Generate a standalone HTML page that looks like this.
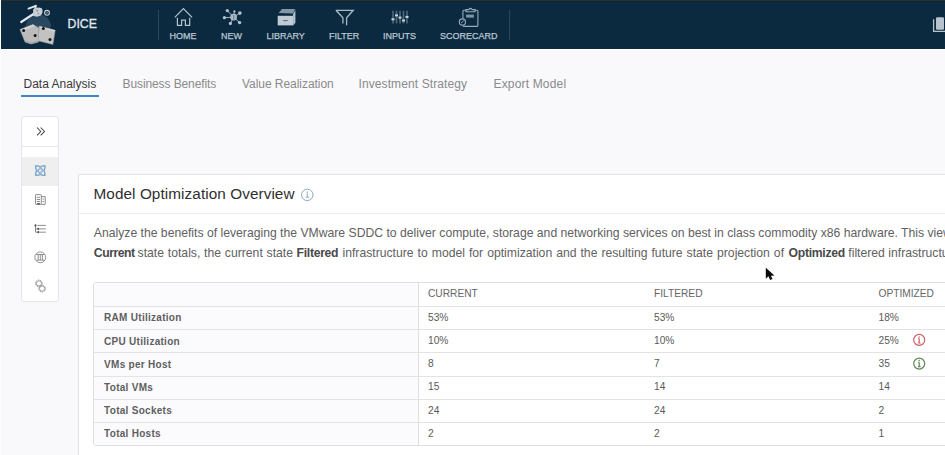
<!DOCTYPE html>
<html><head><meta charset="utf-8">
<style>
*{box-sizing:border-box;margin:0;padding:0}
html,body{width:945px;height:455px;overflow:hidden;background:#f9f9fc;font-family:"Liberation Sans",sans-serif;position:relative}
.a{position:absolute;white-space:nowrap;line-height:1}
#hdr{position:absolute;left:0;top:0;width:945px;height:49px;background:#0b2a40}
#hdr .topline{position:absolute;left:0;top:0;width:945px;height:1px;background:#283037}
#hdr .topline2{position:absolute;left:0;top:1px;width:945px;height:1px;background:#13252f}
#hdr .leftline{position:absolute;left:0;top:0;width:1px;height:49px;background:#f4f5f6}
.sep{position:absolute;top:10px;width:1px;height:30px;background:#2b475c}
.nl{position:absolute;top:31.7px;font-size:9px;line-height:1;color:#bac7d2;-webkit-text-stroke:0.25px #bac7d2;white-space:nowrap}
.tab{position:absolute;top:77.8px;font-size:12px;line-height:1;color:#8a8a8a;white-space:nowrap}
#side{position:absolute;left:20.5px;top:116px;width:38px;height:186px;background:#fff;border:1px solid #e6e6e6;border-radius:3px}
#card{position:absolute;left:78px;top:174px;width:900px;height:300px;background:#fff;border:1px solid #e2e2e4;border-radius:2px}
.desc{position:absolute;left:93.8px;top:222.7px;font-size:12.2px;line-height:20px;color:#616161;white-space:nowrap}
.desc b{color:#4a4a4a}
#tbl{position:absolute;left:93px;top:282px;width:900px;height:163.5px;background:#fff;border:1px solid #dedede;border-radius:3px;overflow:hidden}
.row{position:absolute;left:0;width:900px;height:1px;background:#e3e3e3}
.th{position:absolute;margin-top:1px;font-size:10.2px;line-height:1;color:#666;white-space:nowrap}
.lab{position:absolute;left:104.1px;margin-top:1.4px;font-size:10px;letter-spacing:0.28px;font-weight:bold;line-height:1;color:#5f5f5f;white-space:nowrap}
.val{position:absolute;margin-top:0.8px;font-size:10.2px;line-height:1;color:#5a5a5a;white-space:nowrap}
</style></head><body>
<div id="hdr">
  <div class="topline"></div><div class="topline2"></div><div class="leftline"></div>
  <!-- logo -->
  <svg style="position:absolute;left:0;top:0" width="60" height="49" viewBox="0 0 60 49">
    <path d="M25 28 Q27 16 38 14.5 Q49 14.5 51 25 L50 30 L25 30 Z" fill="#29475e"/>
    <g stroke="#e2e7ec" stroke-linecap="round" fill="none">
      <path d="M21.2 22 L33.5 14" stroke-width="2.2"/>
      <path d="M28.5 8.6 L35.8 5.8" stroke-width="1.9"/>
      <path d="M35.6 6 L34.6 15" stroke-width="1.9"/>
    </g>
    <path d="M33.2 9.2 Q37.5 6.5 41.8 8.3 Q43.8 12 40.8 15.6 Q36.5 17.8 33 15.6 Z" fill="#c6cdd3"/>
    <circle cx="37.2" cy="10.6" r="0.9" fill="#7a8793"/><circle cx="38.3" cy="13.6" r="0.8" fill="#8a96a0"/>
    <circle cx="47" cy="12.8" r="2.4" fill="none" stroke="#c9d0d6" stroke-width="1.1"/>
    <path d="M46.2 12 Q47.5 11.5 47.6 13 Q47 14 46 13.6" fill="none" stroke="#aab3bb" stroke-width="0.6"/>
    <path d="M20 29.5 L33 24.5 L39 28 L38.5 42 L31 44 L25 42 Z" fill="#bcbcbc" stroke="#9fa3a7" stroke-width="0.5"/>
    <path d="M20.3 29.6 L33 24.6 L35 26 L22 31 Z" fill="#d4d4d4"/>
    <path d="M39.4 26.2 L55.2 30.2 L52.9 44.4 L38.1 40.7 Z" fill="#c2c2c2" stroke="#a2a6aa" stroke-width="0.5"/>
    <path d="M39.4 26.3 L55.1 30.3 L54.9 31.6 L39.3 27.6 Z" fill="#d8d8d8"/>
    <path d="M25 42 L31 44 L38.5 42 L38.3 40.5 L31 42.6 L25.5 40.8 Z" fill="#a5a5a5"/>
    <circle cx="23.6" cy="30.4" r="1.5" fill="#151515"/>
    <circle cx="35.1" cy="35.5" r="1.5" fill="#151515"/>
    <circle cx="43.4" cy="28.6" r="1.5" fill="#151515"/>
    <circle cx="50" cy="39.4" r="1.5" fill="#151515"/>
  </svg>
  <div class="a" style="left:67.5px;top:18.4px;font-size:12.3px;color:#e2e8ee;-webkit-text-stroke:0.3px #e2e8ee">DICE</div>
  <div class="sep" style="left:158px"></div>
  <div class="sep" style="left:509px"></div>
  <!-- home -->
  <svg style="position:absolute;left:0;top:0" width="520" height="49" viewBox="0 0 520 49">
    <g fill="none" stroke="#b4c3cf" stroke-width="1.2">
      <path d="M174.8 17.4 L183.4 8.6 L192.1 17.4"/>
      <path d="M177.4 17.8 V25.3 H181.6 V20.2 H185.4 V25.3 H189.7 V17.8"/>
    </g>
    <g stroke="#b4c3cf" stroke-width="0.9">
      <line x1="233.6" y1="17.15" x2="227.3" y2="10.6"/><line x1="233.6" y1="17.15" x2="234.4" y2="11.4"/>
      <line x1="233.6" y1="17.15" x2="239.9" y2="13.1"/><line x1="233.6" y1="17.15" x2="224.4" y2="17.7"/>
      <line x1="233.6" y1="17.15" x2="230.4" y2="23.4"/><line x1="233.6" y1="17.15" x2="239.6" y2="22.6"/>
    </g>
    <g fill="#b4c3cf">
      <circle cx="227.3" cy="10.6" r="1.6"/><circle cx="234.4" cy="11.4" r="1.1"/><circle cx="239.9" cy="13.1" r="1.8"/>
      <circle cx="224.4" cy="17.7" r="1.6"/><circle cx="230.4" cy="23.4" r="1.6"/><circle cx="239.6" cy="22.6" r="1.7"/>
      <circle cx="233.6" cy="17.15" r="3.3"/>
    </g>
    <path d="M233.8 15 V19.5" stroke="#4d6477" stroke-width="0.9"/>
    <circle cx="233.6" cy="17.15" r="2.2" fill="none" stroke="#8a9daf" stroke-width="0.5"/>
    <!-- library -->
    <path d="M278.6 13 L282 9.1 L295.1 9.1 L293 13.5 Z" fill="#8397a8"/>
    <path d="M293.1 14 L295.4 10 L295.4 22.8 L293.1 25.4 Z" fill="#b5c3cf"/>
    <rect x="277.7" y="15.8" width="15.4" height="9.6" fill="#bfcbd5"/>
    <rect x="283.2" y="20.1" width="4.5" height="1" fill="#52687a"/>
    <!-- filter -->
    <path d="M335.9 10.3 H353.2 L346.6 17.7 V25.2 M342.9 23.6 V17.7 L335.9 10.3" fill="none" stroke="#a8bac8" stroke-width="1.3"/>
    <!-- inputs -->
    <g stroke="#4c667a" stroke-width="1.7">
      <line x1="393" y1="10.8" x2="393" y2="23.4"/><line x1="396.5" y1="10.8" x2="396.5" y2="23.4"/><line x1="400" y1="10.8" x2="400" y2="23.4"/>
      <line x1="403.5" y1="10.8" x2="403.5" y2="23.4"/><line x1="407" y1="10.8" x2="407" y2="23.4"/>
    </g>
    <g fill="#c9d4dd">
      <rect x="391.5" y="18.3" width="3" height="2"/><rect x="395" y="14.4" width="3" height="2"/><rect x="398.5" y="16.6" width="3" height="2"/>
      <rect x="402" y="19.5" width="3" height="2"/><rect x="405.5" y="15.9" width="3" height="2"/>
    </g>
    <!-- scorecard -->
    <g fill="none" stroke="#98acbc" stroke-width="1.1">
      <path d="M466 10.2 H463.8 Q462.9 10.2 462.9 11.2 V18.5 M462.9 25.5 Q462.9 26.4 463.8 26.4 H477 Q477.9 26.4 477.9 25.5 V11.2 Q477.9 10.2 477 10.2 H475"/>
      <path d="M466 11.7 V9.6 H468.8 Q470.4 7.2 472 9.6 H475 V11.7 Z"/>
    </g>
    <rect x="466.1" y="14.6" width="7.8" height="3" fill="#7e95a7"/>
    <circle cx="462.4" cy="22" r="3.1" fill="none" stroke="#98acbc" stroke-width="1.1"/>
    <path d="M461 23 L463.8 20.6" stroke="#98acbc" stroke-width="0.9"/>
  </svg>
  <div class="nl" style="left:169.5px">HOME</div>
  <div class="nl" style="left:221px">NEW</div>
  <div class="nl" style="left:266.5px">LIBRARY</div>
  <div class="nl" style="left:329px">FILTER</div>
  <div class="nl" style="left:383px">INPUTS</div>
  <div class="nl" style="left:440px">SCORECARD</div>
  <!-- right icon -->
  <svg style="position:absolute;left:925px;top:10px" width="20" height="30" viewBox="925 10 20 30">
    <path d="M933.6 19.3 V31.4 H945" fill="none" stroke="#b7c4cf" stroke-width="1.3"/>
    <rect x="936" y="17.2" width="8" height="12.5" rx="1.2" fill="#b9c3cd"/>
  </svg>
</div>
<div style="position:absolute;left:0;top:49px;width:945px;height:1px;background:#fff"></div>
<div style="position:absolute;left:0;top:0;width:1px;height:455px;background:#fdfdfe"></div>

<!-- tabs -->
<div class="tab" style="left:23.5px;color:#3a3a3a">Data Analysis</div>
<div style="position:absolute;left:21px;top:95px;width:78px;height:2px;background:#3b88bf"></div>
<div class="tab" style="left:122.5px;letter-spacing:-0.1px">Business Benefits</div>
<div class="tab" style="left:242px;letter-spacing:-0.05px">Value Realization</div>
<div class="tab" style="left:358.5px;letter-spacing:0.1px">Investment Strategy</div>
<div class="tab" style="left:493.5px;letter-spacing:0.17px">Export Model</div>

<!-- side -->
<div id="side">
  <div style="position:absolute;left:0;top:29px;width:36px;height:1px;background:#e6e6e6"></div>
  <div style="position:absolute;left:0;top:40px;width:36px;height:29px;background:#efefef"></div>
</div>
<svg style="position:absolute;left:0;top:100px" width="70" height="210" viewBox="0 100 70 210">
  <path d="M37 127.5 L40.7 131.5 L37 135.4 M40.7 127.5 L44.5 131.5 L40.7 135.4" fill="none" stroke="#474747" stroke-width="1.05"/>
  <!-- active -->
  <g fill="none" stroke="#6a9dc6" stroke-width="0.8">
    <path d="M35.3 165.5 Q40.3 167.2 45.3 165.5 Q43.6 170.6 45.3 175.7 Q40.3 174 35.3 175.7 Q37 170.6 35.3 165.5 Z"/>
    <ellipse cx="40.3" cy="170.6" rx="6" ry="2.5" transform="rotate(45 40.3 170.6)"/>
    <ellipse cx="40.3" cy="170.6" rx="6" ry="2.5" transform="rotate(-45 40.3 170.6)"/>
    <ellipse cx="40.3" cy="170.6" rx="2.4" ry="1.4" transform="rotate(-45 40.3 170.6)"/>
  </g>
  <!-- building -->
  <g fill="none" stroke="#808080" stroke-width="0.9">
    <rect x="35.5" y="194.6" width="5.8" height="9.8" rx="0.6"/>
    <path d="M41.3 196.6 H45.2 V204.4 H41.3"/>
    <path d="M36.8 197.3 H40 M36.8 199.5 H40 M36.8 201.5 H40 M42.5 199 H44 M42.5 201.5 H44"/>
  </g>
  <rect x="37" y="203" width="3" height="1.6" fill="#666"/>
  <!-- tree list -->
  <g fill="none" stroke="#808080" stroke-width="0.9">
    <path d="M35.5 225.4 V232.2 H38.4 M35.5 228.9 H38.4"/>
    <path d="M37.5 225.4 H45.8 M40 228.9 H45.8 M40 232.2 H45.8"/>
  </g>
  <g fill="#555"><circle cx="35.5" cy="225.4" r="1.1"/><circle cx="38.4" cy="228.9" r="1.1"/><circle cx="38.4" cy="232.2" r="1.1"/></g>
  <!-- globe -->
  <g fill="none" stroke="#858585" stroke-width="0.9">
    <circle cx="40.3" cy="257.3" r="5.4"/>
    <path d="M36.2 254.5 H44.4 M36.2 260.1 H44.4 M38.2 254.5 V260.1 M40.3 254.5 V260.1 M42.4 254.5 V260.1"/>
  </g>
  <!-- gears -->
  <g fill="none" stroke="#8a8a8a">
    <circle cx="38.9" cy="283.4" r="2.6" stroke-width="0.8"/>
    <circle cx="38.9" cy="283.4" r="3.4" stroke-width="1" stroke-dasharray="1.1 1"/>
    <circle cx="42.1" cy="288.6" r="2.6" stroke-width="0.8"/>
    <circle cx="42.1" cy="288.6" r="3.4" stroke-width="1" stroke-dasharray="1.1 1"/>
  </g>
</svg>

<!-- card -->
<div id="card">
  <div style="position:absolute;left:0;top:38px;width:900px;height:1px;background:#ececec"></div>
</div>
<div class="a" style="left:93.5px;top:185.6px;font-size:15.3px;letter-spacing:0.08px;color:#2f2f2f">Model Optimization Overview</div>
<svg style="position:absolute;left:296px;top:184px" width="22" height="22" viewBox="296 184 22 22">
  <circle cx="307.3" cy="194.9" r="5.7" fill="none" stroke="#8aa8c3" stroke-width="1"/>
  <path d="M307.3 191.3 V197 M305.5 197.2 H309.3" stroke="#8aa8c3" stroke-width="0.9" fill="none"/>
</svg>
<div class="desc" style="top:222.7px">Analyze the benefits of leveraging the VMware SDDC to deliver compute, storage and networking services on best in class commodity x86 hardware. This view</div>
<div class="desc" style="top:242.7px;left:93.8px"><b style="letter-spacing:-0.45px">Current</b></div>
<div class="desc" style="top:242.7px;left:137.6px;word-spacing:0.4px">state totals, the current state</div>
<div class="desc" style="top:242.7px;left:296.6px"><b style="letter-spacing:-0.3px">Filtered</b></div>
<div class="desc" style="top:242.7px;left:342.5px;word-spacing:0.6px">infrastructure to model for optimization and the resulting future state projection of</div>
<div class="desc" style="top:242.7px;left:788.6px"><b style="letter-spacing:-0.3px">Optimized</b></div>
<div class="desc" style="top:242.7px;left:848.3px">filtered infrastructure</div>

<!-- table -->
<div id="tbl">
  <div style="position:absolute;left:0;top:0;width:324px;height:170px;background:#fbfbfd"></div>
  <div style="position:absolute;left:323.5px;top:0;width:1px;height:170px;background:#e0e0e0"></div>
</div>
<div class="row" style="left:93px;top:306px;width:860px"></div>
<div class="row" style="left:93px;top:329px;width:860px"></div>
<div class="row" style="left:93px;top:352px;width:860px"></div>
<div class="row" style="left:93px;top:375.5px;width:860px"></div>
<div class="row" style="left:93px;top:399px;width:860px"></div>
<div class="row" style="left:93px;top:422px;width:860px"></div>

<div class="th" style="left:428px;top:287.9px">CURRENT</div>
<div class="th" style="left:654px;top:287.9px">FILTERED</div>
<div class="th" style="left:878.5px;top:287.9px">OPTIMIZED</div>

<div class="lab" style="top:312px">RAM Utilization</div>
<div class="lab" style="top:335.2px">CPU Utilization</div>
<div class="lab" style="top:358.4px">VMs per Host</div>
<div class="lab" style="top:381.6px">Total VMs</div>
<div class="lab" style="top:404.8px">Total Sockets</div>
<div class="lab" style="top:428px">Total Hosts</div>

<div class="val" style="left:428px;top:312px">53%</div>
<div class="val" style="left:428px;top:335.2px">10%</div>
<div class="val" style="left:428px;top:358.4px">8</div>
<div class="val" style="left:428px;top:381.6px">15</div>
<div class="val" style="left:428px;top:404.8px">24</div>
<div class="val" style="left:428px;top:428px">2</div>

<div class="val" style="left:654px;top:312px">53%</div>
<div class="val" style="left:654px;top:335.2px">10%</div>
<div class="val" style="left:654px;top:358.4px">7</div>
<div class="val" style="left:654px;top:381.6px">14</div>
<div class="val" style="left:654px;top:404.8px">24</div>
<div class="val" style="left:654px;top:428px">2</div>

<div class="val" style="left:878.5px;top:312px">18%</div>
<div class="val" style="left:878.5px;top:335.2px">25%</div>
<div class="val" style="left:878.5px;top:358.4px">35</div>
<div class="val" style="left:878.5px;top:381.6px">14</div>
<div class="val" style="left:878.5px;top:404.8px">2</div>
<div class="val" style="left:878.5px;top:428px">1</div>

<svg style="position:absolute;left:908px;top:330px" width="22" height="40" viewBox="908 330 22 40">
  <g fill="none" stroke="#cf5f69" stroke-width="1.2">
    <circle cx="919.2" cy="339.9" r="5.5"/>
    <path d="M919.2 338.6 V342.8 M918 343 H920.6 M918.2 338.6 H919.2"/>
  </g>
  <circle cx="919.2" cy="336.9" r="0.75" fill="#cf5f69"/>
  <g fill="none" stroke="#5d8654" stroke-width="1.2">
    <circle cx="919.2" cy="363.6" r="5.5"/>
    <path d="M919.2 362.3 V366.5 M918 366.7 H920.6 M918.2 362.3 H919.2"/>
  </g>
  <circle cx="919.2" cy="360.6" r="0.75" fill="#5d8654"/>
</svg>


<!-- cursor -->
<svg style="position:absolute;left:760px;top:262px" width="22" height="22" viewBox="760 262 22 22">
  <path d="M765.8 267.8 L765.8 278.8 L768.4 276.3 L770.2 280 L772.5 279.1 L770.9 275.7 L774.4 275.6 Z" fill="#0a0a0a"/>
</svg>
</body></html>
